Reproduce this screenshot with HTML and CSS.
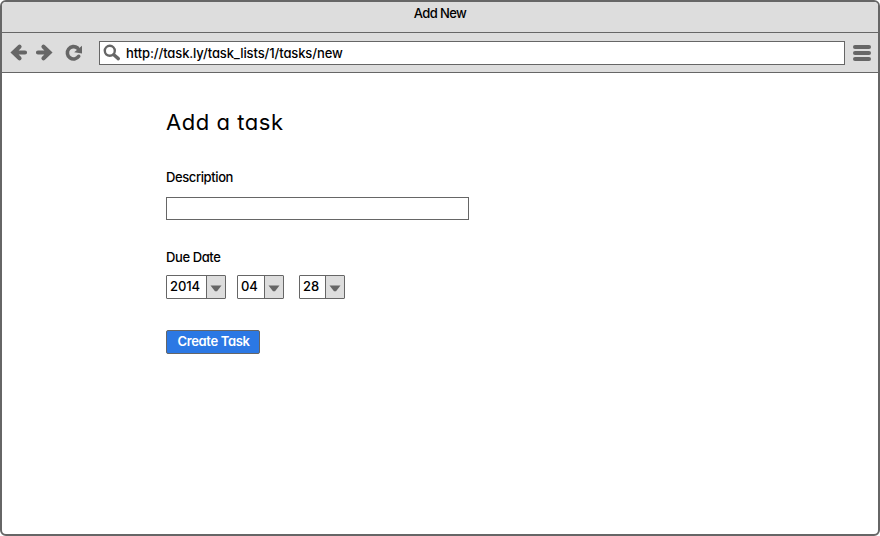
FILE: index.html
```html
<!DOCTYPE html>
<html lang="en">
<head>
<meta charset="utf-8">
<title>Add New</title>
<link rel="stylesheet" href="styles.css">
</head>
<body>
<div class="window">
  <header class="titlebar"><span class="window-title">Add New</span></header>
  <nav class="toolbar">
    <svg class="nav-icons" width="97" height="39" viewBox="2 33 97 39" fill="none" stroke="#666" stroke-width="4.200">
      <path d="M25 52.500H14M19.500 46.800L13.500 52.500L19.500 58.200" stroke-linecap="round"/>
      <path d="M38 52.500H49M43.500 46.800L49.500 52.500L43.500 58.200" stroke-linecap="round"/>
      <path d="M77.500 48A6.200 6.200 0 1 0 78.700 56.300" stroke-width="3.600" stroke-linecap="round"/>
      <path d="M82 45.700V53.500L74.200 52.200Z" fill="#666" stroke="none"/>
    </svg>
    <div class="address">
      <svg class="search-icon" width="18" height="18" viewBox="103 44 18 18" fill="none" stroke="#666">
        <circle cx="109.800" cy="50.800" r="5" stroke-width="2.400"/>
        <path d="M113.800 54.800L118.300 58.600" stroke-width="3.400" stroke-linecap="round"/>
      </svg>
      <span class="url">http://task.ly/task_lists/1/tasks/new</span>
    </div>
    <div class="menu"><i></i><i></i><i></i></div>
  </nav>
  <main class="page">
    <h1>Add a task</h1>
    <label class="label description" for="description">Description</label>
    <input class="field" id="description" type="text">
    <div class="label due">Due Date</div>
    <div class="dates">
      <div class="select year"><span>2014</span><b><svg width="12" height="7"><path d="M.5 .5H11.500L7 6.300H5Z"/></svg></b></div>
      <div class="select month"><span>04</span><b><svg width="12" height="7"><path d="M.5 .5H11.500L7 6.300H5Z"/></svg></b></div>
      <div class="select day"><span>28</span><b><svg width="12" height="7"><path d="M.5 .5H11.500L7 6.300H5Z"/></svg></b></div>
    </div>
    <button class="create" type="button">Create Task</button>
  </main>
</div>
</body>
</html>
```
FILE: styles.css
```css
* { box-sizing: border-box; }
body {
  margin: 0;
  background: #fff;
  color: #000;
  font: 500 13px/16px Inter, "Liberation Sans", sans-serif;
  font-feature-settings: "cv11";
}
.window {
  height: 536px;
  border: 2px solid #666;
  border-radius: 6px;
  overflow: hidden;
}
.titlebar {
  height: 31px;
  padding-top: 3px;
  background: #ddd;
  border-bottom: 1px solid #666;
  text-align: center;
}
.window-title { letter-spacing: -.6px; }
.toolbar {
  display: flex;
  height: 40px;
  background: #ddd;
  border-bottom: 1px solid #666;
}
.nav-icons { flex: none; }
.address {
  display: flex;
  width: 746px;
  height: 24px;
  margin-top: 8px;
  padding: 2px 0 0 3px;
  background: #fff;
  border: 1px solid #666;
}
.search-icon { flex: none; }
.url { margin: 1px 0 0 5px; letter-spacing: -.11px; }
.menu {
  display: grid;
  gap: 2px;
  width: 18px;
  height: 16px;
  margin: 12px 0 0 8px;
}
.menu i { height: 4px; background: #666; border-radius: 2px; }
.page {
  display: flex;
  flex-direction: column;
  align-items: flex-start;
  padding: 35px 0 0 164px;
}
h1 {
  margin: 0;
  font-size: 22px;
  line-height: 28px;
  font-weight: 400;
  letter-spacing: .55px;
}
.label { letter-spacing: -.4px; }
.description { margin-top: 33px; }
.field {
  width: 303px;
  height: 23px;
  margin: 12px 0 0;
  padding: 0 4px;
  border: 1px solid #666;
  background: #fff;
  font: inherit;
}
.due { margin-top: 29px; }
.dates { display: flex; margin-top: 10px; }
.select {
  display: flex;
  height: 24px;
  border: 1px solid #666;
  border-radius: 1px;
}
.select span { flex: 1; padding: 2px 0 0 3px; letter-spacing: -.1px; }
.select b {
  display: flex;
  width: 19px;
  padding: 9px 0 0 3px;
  border-left: 1px solid #666;
  background: #ddd;
}
.select svg { fill: #666; }
.year { width: 60px; }
.month { width: 47px; margin-left: 11px; }
.day { width: 46px; margin-left: 15px; }
.create {
  width: 94px;
  height: 24px;
  margin: 31px 0 0;
  padding: 0 0 2px 1px;
  border: 1px solid #666;
  border-radius: 2px;
  background: #2b78e4;
  color: #fff;
  font: inherit;
  font-weight: 600;
  font-feature-settings: inherit;
  letter-spacing: -.35px;
}
```
